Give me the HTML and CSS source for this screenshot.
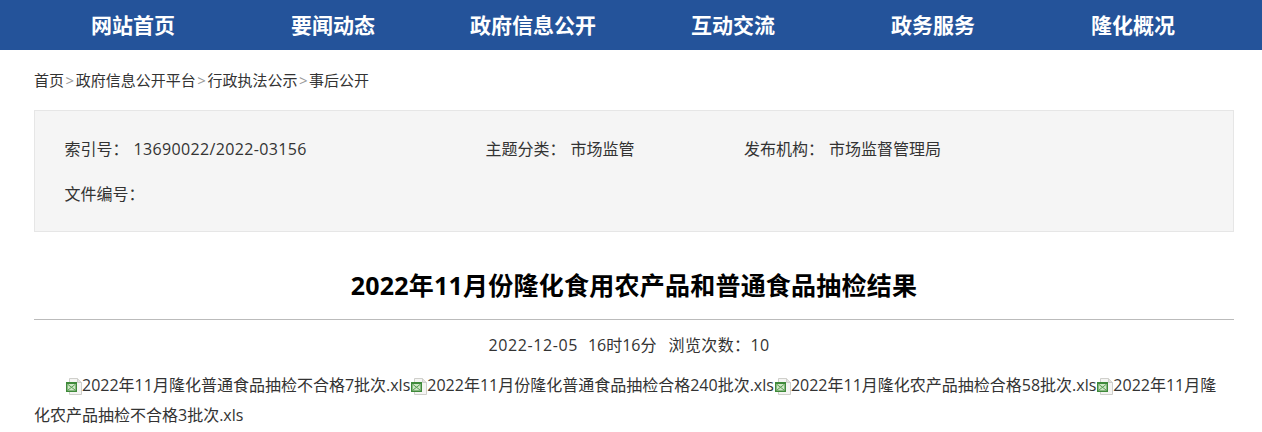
FILE: index.html
```html
<!DOCTYPE html>
<html lang="zh-CN">
<head>
<meta charset="utf-8">
<title>2022年11月份隆化食用农产品和普通食品抽检结果</title>
<link rel="stylesheet" href="styles.css">
</head>
<body>
<svg class="sprite" width="0" height="0" aria-hidden="true">
  <symbol id="xls" viewBox="0 0 17 17">
    <path d="M4.5 0.5H12.5L16.5 4.5V16.5H4.5Z" fill="#f5f5f3" stroke="#cfcfcb"/>
    <path d="M12.5 0.5V4.5H16.5" fill="#e2e2de" stroke="#cfcfcb"/>
    <rect x="1" y="4" width="11" height="10" fill="#3f8a3a"/>
    <rect x="2.5" y="6" width="8" height="6.5" fill="#cfe6c6"/>
    <path d="M3 6.5L10 12M10 6.5L3 12" stroke="#5a9f55" stroke-width="1"/>
  </symbol>
</svg>
<nav class="nav">
  <ul class="nav-list">
    <li class="nav-item">网站首页</li>
    <li class="nav-item">要闻动态</li>
    <li class="nav-item">政府信息公开</li>
    <li class="nav-item">互动交流</li>
    <li class="nav-item">政务服务</li>
    <li class="nav-item">隆化概况</li>
  </ul>
</nav>
<main class="wrap">
  <div class="crumbs">
    <a>首页</a><span class="sep">&gt;</span><a>政府信息公开平台</a><span class="sep">&gt;</span><a>行政执法公示</a><span class="sep">&gt;</span><a>事后公开</a>
  </div>
  <section class="meta">
    <div class="meta-row">
      <div class="meta-cell meta-index"><span class="meta-label">索引号：</span><span class="num">13690022/2022-03156</span></div>
      <div class="meta-cell meta-topic"><span class="meta-label">主题分类：</span><span>市场监管</span></div>
      <div class="meta-cell"><span class="meta-label">发布机构：</span><span>市场监督管理局</span></div>
    </div>
    <div class="meta-row">
      <div class="meta-cell"><span>文件编号：</span></div>
    </div>
  </section>
  <h1 class="title">2022年11月份隆化食用农产品和普通食品抽检结果</h1>
  <div class="info"><span class="date">2022-12-05</span><span>16时16分</span><span class="views">浏览次数：10</span></div>
  <p class="body"><svg class="ico"><use href="#xls"/></svg>2022年11月隆化普通食品抽检不合格7批次.xls<svg class="ico"><use href="#xls"/></svg>2022年11月份隆化普通食品抽检合格240批次.xls<svg class="ico"><use href="#xls"/></svg>2022年11月隆化农产品抽检合格58批次.xls<svg class="ico"><use href="#xls"/></svg>2022年11月隆化农产品抽检不合格3批次.xls</p>
</main>
</body>
</html>
```
FILE: styles.css
```css
* { box-sizing: border-box; }
html, body { margin: 0; padding: 0; }
body {
  background: #fff;
  color: #333;
  font-family: "Open Sans", "Noto Sans CJK SC", sans-serif;
  overflow: hidden;
}
.sprite { position: absolute; }
.nav { height: 50px; background: #24539a; }
.nav-list {
  display: flex;
  list-style: none;
  margin: 0;
  padding: 0 0 0 33px;
}
.nav-item {
  width: 200px;
  height: 50px;
  line-height: 50px;
  text-align: center;
  color: #fff;
  font-size: 21px;
  font-weight: 700;
  white-space: nowrap;
}
.wrap { width: 1200px; margin-left: 34px; }
.crumbs {
  height: 60px;
  padding-top: 19px;
  font-size: 15px;
  line-height: 22px;
  color: #333;
}
.sep { display: inline-block; width: 11.7px; text-align: center; color: #999; }
.meta {
  height: 122px;
  background: #f5f5f5;
  border: 1px solid #e6e6e6;
  padding: 16px 29.5px 0;
  font-size: 16px;
  line-height: 45px;
}
.meta-row { display: flex; height: 45px; }
.meta-index { width: 421px; }
.meta-topic { width: 258.5px; }
.meta-label { margin-right: 5px; }
.num { letter-spacing: 0.35px; }
.title {
  margin: 0;
  height: 88px;
  padding-top: 32px;
  border-bottom: 1px solid #bbb;
  text-align: center;
  color: #000;
  font-size: 25px;
  font-weight: 700;
  line-height: 42px;
  letter-spacing: 0.23px;
}
.info {
  display: flex;
  justify-content: center;
  gap: 12px;
  height: 50px;
  padding-right: 10px;
  line-height: 50px;
  font-size: 16px;
}
.date { letter-spacing: 0.6px; margin-right: -2px; }
.views { letter-spacing: 0.4px; }
.body {
  margin: 0;
  padding-right: 4px;
  font-size: 16px;
  line-height: 30px;
  text-indent: 31px;
  color: #333;
}
.ico {
  width: 17px;
  height: 17px;
  vertical-align: -4px;
}
```
